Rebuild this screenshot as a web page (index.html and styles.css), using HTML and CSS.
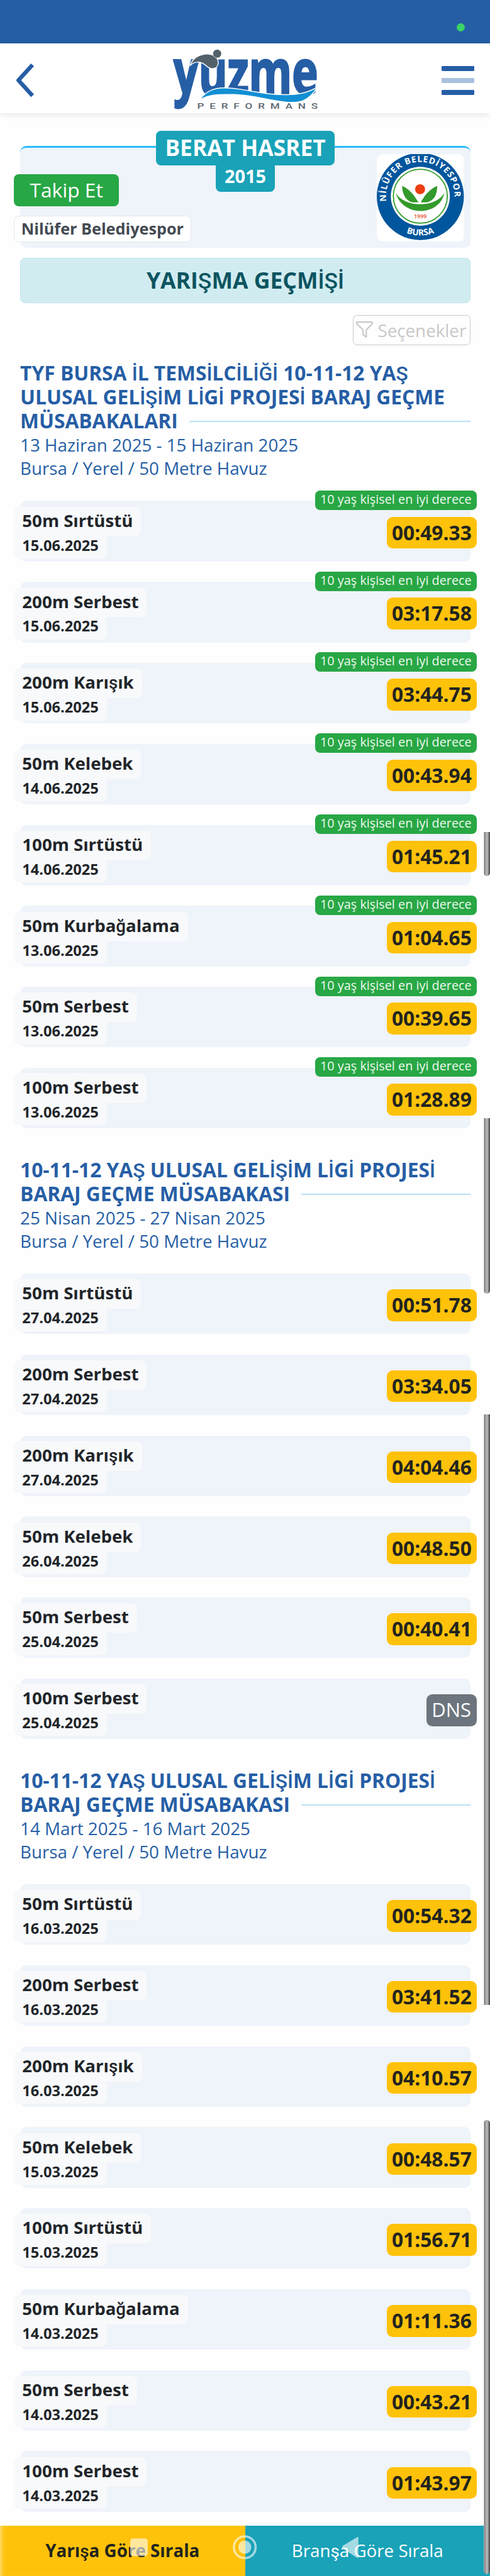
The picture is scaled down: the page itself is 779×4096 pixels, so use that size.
FILE: index.html
```html
<!DOCTYPE html>
<html lang="tr">
<head>
<meta charset="utf-8">
<title>Yüzme Performans</title>
<link rel="stylesheet" href="styles.css">
</head>
<body>
<div class="status"><span class="dot"></span></div>
<header class="header">
  <svg class="back" viewBox="0 0 42 74"><path d="M37 3 6 37l31 34" fill="none" stroke="#265ea5" stroke-width="9" stroke-linejoin="round"/></svg>
  <svg class="brand" viewBox="0 0 330 145">
    <text class="brand-word" x="7" y="101" textLength="318" lengthAdjust="spacingAndGlyphs">yuzme</text>
    <path d="M43 40C49 18 75 9 94 16c15 7 15 28 0 30-14 1-15-12-30-14-8-1-15 0-21 8z" fill="#53616b" stroke="#fff" stroke-width="2"/>
    <circle cx="103" cy="13" r="9.5" fill="#53616b" stroke="#fff" stroke-width="1"/>
    <path d="M64 115C85 85 115 86 150 91c40 6 70 14 115 12 25-1 40-6 59-16-20 32-40 35-68 33-40-4-70-15-115-17-35-1-55 0-77 12z" fill="#128fd3" stroke="#fff" stroke-width="2"/>
    <text class="brand-sub" x="59" y="135" textLength="278" lengthAdjust="spacingAndGlyphs">PERFORMANS</text>
  </svg>
  <div class="menu"><i></i><i class="mid"></i><i></i></div>
</header>
<main class="page">
  <section class="profile">
    <div class="who"><div class="name">BERAT HASRET</div><div class="year">2015</div></div>
    <div class="left"><button class="follow">Takip Et</button><div class="club">Nilüfer Belediyespor</div></div>
    <svg class="crest" viewBox="0 0 192 193">
      <defs><path id="arcTop" d="M21.500 105A75.500 75.500 0 1 1 170.500 105"/><path id="arcBottom" d="M10 93.500A86 86 0 0 0 182 93.500"/></defs>
      <rect width="192" height="193" fill="#fff"/>
      <circle cx="96" cy="93.500" r="96" fill="#00569d"/>
      <circle cx="96" cy="93" r="65" fill="#fff"/>
      <circle cx="96" cy="93" r="59.500" fill="none" stroke="#339a2b" stroke-width="2.500"/>
      <circle cx="95.500" cy="77.500" r="11" fill="#ec3e10"/>
      <path d="M56 70C76 79 85 96 92 106.500H83C68 107 56 92 56 70zM133 70C113 79 103 96 97 106.500H107C123 106 134 92 133 70zM42 86C61 118 128 120 149 86 138 138 57 139 42 86z" fill="#339a2b"/>
      <text class="crest-text"><textPath href="#arcTop" startOffset="1" textLength="250">NİLÜFER BELEDİYESPOR</textPath></text>
      <text class="crest-text"><textPath href="#arcBottom" startOffset="50%" text-anchor="middle">BURSA</textPath></text>
      <text class="crest-year" x="96" y="142" text-anchor="middle">1999</text>
    </svg>
  </section>
  <h1 class="band">YARI<b>Ş</b>MA GEÇM<b>İŞİ</b></h1>
  <div class="tools"><button class="options"><svg viewBox="0 0 40 42"><path d="M3 3h34v4L24 20v16l-7-5V20L3 7z" fill="none" stroke="#c8c8c8" stroke-width="3" stroke-linejoin="round"/></svg>Seçenekler</button></div>

  <section class="meet">
    <h2>TYF BURSA <b>İ</b>L TEMS<b>İ</b>LC<b>İ</b>L<b>İĞİ</b> 10-11-12 YA<b>Ş</b><br>ULUSAL GEL<b>İŞİ</b>M L<b>İ</b>G<b>İ</b> PROJES<b>İ</b> BARAJ GEÇME<span class="last">MÜSABAKALARI</span></h2>
    <p>13 Haziran 2025 - 15 Haziran 2025<br>Bursa / Yerel / 50 Metre Havuz</p>
    <div class="rows">
      <article class="row"><div><h3>50m Sırtüstü</h3><time>15.06.2025</time></div><strong>00:49.33</strong><em>10 yaş kişisel en iyi derece</em></article>
      <article class="row"><div><h3>200m Serbest</h3><time>15.06.2025</time></div><strong>03:17.58</strong><em>10 yaş kişisel en iyi derece</em></article>
      <article class="row"><div><h3>200m Karı<b>ş</b>ık</h3><time>15.06.2025</time></div><strong>03:44.75</strong><em>10 yaş kişisel en iyi derece</em></article>
      <article class="row"><div><h3>50m Kelebek</h3><time>14.06.2025</time></div><strong>00:43.94</strong><em>10 yaş kişisel en iyi derece</em></article>
      <article class="row"><div><h3>100m Sırtüstü</h3><time>14.06.2025</time></div><strong>01:45.21</strong><em>10 yaş kişisel en iyi derece</em></article>
      <article class="row"><div><h3>50m Kurba<b>ğ</b>alama</h3><time>13.06.2025</time></div><strong>01:04.65</strong><em>10 yaş kişisel en iyi derece</em></article>
      <article class="row"><div><h3>50m Serbest</h3><time>13.06.2025</time></div><strong>00:39.65</strong><em>10 yaş kişisel en iyi derece</em></article>
      <article class="row"><div><h3>100m Serbest</h3><time>13.06.2025</time></div><strong>01:28.89</strong><em>10 yaş kişisel en iyi derece</em></article>
    </div>
  </section>

  <section class="meet">
    <h2>10-11-12 YA<b>Ş</b> ULUSAL GEL<b>İŞİ</b>M L<b>İ</b>G<b>İ</b> PROJES<b>İ</b><span class="last">BARAJ GEÇME MÜSABAKASI</span></h2>
    <p>25 Nisan 2025 - 27 Nisan 2025<br>Bursa / Yerel / 50 Metre Havuz</p>
    <div class="rows">
      <article class="row"><div><h3>50m Sırtüstü</h3><time>27.04.2025</time></div><strong>00:51.78</strong></article>
      <article class="row"><div><h3>200m Serbest</h3><time>27.04.2025</time></div><strong>03:34.05</strong></article>
      <article class="row"><div><h3>200m Karı<b>ş</b>ık</h3><time>27.04.2025</time></div><strong>04:04.46</strong></article>
      <article class="row"><div><h3>50m Kelebek</h3><time>26.04.2025</time></div><strong>00:48.50</strong></article>
      <article class="row"><div><h3>50m Serbest</h3><time>25.04.2025</time></div><strong>00:40.41</strong></article>
      <article class="row"><div><h3>100m Serbest</h3><time>25.04.2025</time></div><strong class="dns">DNS</strong></article>
    </div>
  </section>

  <section class="meet">
    <h2>10-11-12 YA<b>Ş</b> ULUSAL GEL<b>İŞİ</b>M L<b>İ</b>G<b>İ</b> PROJES<b>İ</b><span class="last">BARAJ GEÇME MÜSABAKASI</span></h2>
    <p>14 Mart 2025 - 16 Mart 2025<br>Bursa / Yerel / 50 Metre Havuz</p>
    <div class="rows">
      <article class="row"><div><h3>50m Sırtüstü</h3><time>16.03.2025</time></div><strong>00:54.32</strong></article>
      <article class="row"><div><h3>200m Serbest</h3><time>16.03.2025</time></div><strong>03:41.52</strong></article>
      <article class="row"><div><h3>200m Karı<b>ş</b>ık</h3><time>16.03.2025</time></div><strong>04:10.57</strong></article>
      <article class="row"><div><h3>50m Kelebek</h3><time>15.03.2025</time></div><strong>00:48.57</strong></article>
      <article class="row"><div><h3>100m Sırtüstü</h3><time>15.03.2025</time></div><strong>01:56.71</strong></article>
      <article class="row"><div><h3>50m Kurba<b>ğ</b>alama</h3><time>14.03.2025</time></div><strong>01:11.36</strong></article>
      <article class="row"><div><h3>50m Serbest</h3><time>14.03.2025</time></div><strong>00:43.21</strong></article>
      <article class="row"><div><h3>100m Serbest</h3><time>14.03.2025</time></div><strong>01:43.97</strong></article>
    </div>
  </section>
</main>
<footer class="sort">
  <div class="by-race">Yarı<b>ş</b>a Göre Sırala</div>
  <div class="by-stroke">Bran<b>ş</b>a Göre Sırala</div>
  <svg class="sysnav" viewBox="0 0 1080 112"><g fill="#fff" fill-opacity=".6"><rect x="287" y="28" width="38.500" height="39" rx="6"/><circle cx="539.500" cy="47.500" r="14.500"/><path d="M786 26q4-3 4 1v42q0 4-4 1l-30-19q-4-3 0-7z"/></g><circle cx="539.500" cy="47.500" r="24" fill="none" stroke="#fff" stroke-opacity=".6" stroke-width="5"/></svg>
</footer>
<div class="thumb t1"></div><div class="thumb t2"></div><div class="thumb t3"></div><div class="thumb t4"></div>
</body>
</html>
```
FILE: styles.css
```css
/* 1rem = 10 design pixels */
html { font-size: 7.2115px; }
* { box-sizing: border-box; }
body { position: relative; margin: 0; width: 779px; height: 4096px; overflow: hidden; background: #fefefe; font-family: "Open Sans", "Noto Sans", sans-serif; display: flex; flex-direction: column; }
h1, h2, h3, p { margin: 0; }
button { font-family: inherit; }
b { font-family: Roboto, sans-serif; font-weight: 500; line-height: 0; }

.status { flex: none; height: 9.6rem; background: #265ea5; display: flex; justify-content: flex-end; padding: 5.1rem 5.5rem 0 0; }
.dot { width: 1.8rem; height: 1.8rem; border-radius: 50%; background: #39d468; }

.header { flex: none; height: 15.4rem; background: #fff; box-shadow: 0 .3rem 1.6rem rgba(0,0,0,.12); display: flex; justify-content: space-between; align-items: flex-start; padding: 0 3.4rem; }
.back { width: 4.2rem; height: 7.4rem; margin-top: 4.4rem; }
.brand { width: 33rem; height: 14.5rem; margin: .9rem 0 0 3.1rem; overflow: visible; }
.brand-word { font: 700 134px "Open Sans", sans-serif; fill: #265ea5; stroke: #265ea5; stroke-width: 4; }
.brand-sub { font: 500 17.5px Roboto, sans-serif; letter-spacing: 9px; fill: #5c6870; }
.menu { width: 7.3rem; display: flex; flex-direction: column; gap: 1.5rem; margin-top: 5rem; }
.menu i { height: 1.1rem; border-radius: .2rem; background: #265ea5; }
.menu .mid { background: #a9c0de; }

.page { flex: none; height: 531.9rem; padding: 7.2rem 4.3rem 0 4.45rem; }
.profile { position: relative; height: 22.5rem; border-top: .5rem solid #29bdfa; border-radius: 1.4rem; background: #eff3fa; display: flex; justify-content: space-between; padding: 1.35rem 1.4rem 0 0; }
.who { position: absolute; top: -3.8rem; left: 0; right: 0; display: flex; flex-direction: column; align-items: center; color: #fff; font-weight: 700; }
.name { width: 39.3rem; height: 7.6rem; border-radius: 1.1rem; background: #19a2b8; font-size: 4.9rem; line-height: 7.4rem; text-align: center; white-space: nowrap; }
.year { width: 13rem; height: 5.9rem; border-radius: 0 0 1.1rem 1.1rem; background: #19a2b8; font-size: 4rem; line-height: 4.7rem; text-align: center; }
.left { margin: 4.5rem 0 0 -1.35rem; display: flex; flex-direction: column; align-items: flex-start; gap: 2.1rem; }
.follow { border: 0; padding: 0; width: 23.1rem; height: 7rem; border-radius: 1.1rem; background: #28a745; color: #fff; font-size: 4.4rem; line-height: 7rem; }
.club { width: 39rem; height: 5.8rem; border: .2rem solid #e4e8f0; border-radius: 1.1rem; background: #fff; color: #434a52; font-size: 3.5rem; font-weight: 700; line-height: 5.3rem; text-align: center; white-space: nowrap; }
.crest { width: 19.2rem; height: 19.3rem; border-radius: 1.3rem; }
.crest-text { font: 700 19px "Open Sans", sans-serif; fill: #fff; }
.crest-year { font: 600 12.5px "Open Sans", sans-serif; fill: #e5502a; }

.band { height: 10rem; margin-top: 2.2rem; border: .2rem solid #bee5eb; border-radius: 1.1rem; background: #d1ecf1; color: #0c5460; font-size: 4.93rem; line-height: 9.6rem; text-align: center; }
.tools { display: flex; justify-content: flex-end; margin-top: 2.6rem; height: 6.7rem; }
.options { display: flex; align-items: center; width: 25.9rem; height: 6.7rem; padding: 0 .4rem; gap: .9rem; border: .2rem solid #c8c8c8; border-radius: .9rem; background: transparent; color: #c8c8c8; font-size: 3.85rem; line-height: 6.2rem; white-space: nowrap; }
.options svg { width: 4rem; height: 4.2rem; flex: none; }

.meet { padding-top: 6.5rem; }
.tools + .meet { padding-top: 3.35rem; }
.meet h2 { color: #265ea5; font-size: 4.4rem; line-height: 5.3rem; white-space: nowrap; }
.last { display: flex; align-items: center; gap: 2.5rem; }
.last::after { content: ""; flex: 1; height: .3rem; background: #b8e2f4; margin-top: .2rem; }
.meet p { color: #265ea5; font-size: 3.85rem; line-height: 5.2rem; white-space: nowrap; }
.tools + .meet p { padding-top: .1rem; }
.rows { display: grid; gap: 4.5rem; margin-top: 4.5rem; }
.row { position: relative; height: 13.36rem; border-radius: 1.4rem; background: #eff3fa; display: flex; justify-content: space-between; align-items: flex-start; color: #212529; }
.row > div { margin: 1.3rem 0 0 -1.35rem; display: flex; flex-direction: column; align-items: flex-start; }
.row h3 { height: 6.5rem; padding: 0 1.8rem; border-radius: 1.2rem 1.2rem 1.2rem 0; background: #f8f9fb; font-size: 3.83rem; line-height: 6.1rem; white-space: nowrap; }
.row time { height: 4.9rem; padding: 0 1.8rem; border-radius: 0 0 1.2rem 1.2rem; background: #f8f9fb; font-size: 3.27rem; font-weight: 700; line-height: 3.9rem; }
.row strong { width: 19.8rem; height: 7rem; margin: 3.5rem -1.35rem 0 0; border-radius: 1.3rem; background: #ffc20a; font-size: 4.4rem; line-height: 6.9rem; text-align: center; color: #22241f; }
.row .dns { width: 11.1rem; background: #6c757d; color: #fff; font-weight: 400; font-size: 4.3rem; }
.row em { position: absolute; top: -2.3rem; right: -1.35rem; width: 35.6rem; height: 4.3rem; border-radius: 1.1rem; background: #28a745; color: #eef9ef; font-size: 2.75rem; font-style: normal; line-height: 4rem; text-align: center; white-space: nowrap; }

.sort { position: relative; flex: none; height: 11.2rem; display: grid; grid-template-columns: 1fr 1fr; font-size: 3.85rem; line-height: 11rem; text-align: center; white-space: nowrap; }
.by-race { background: #ffc20a; color: #22241f; font-weight: 700; box-shadow: inset .8rem 0 1rem -.5rem #ffe08a; }
.by-stroke { background: #19a2b8; color: #fff; }
.by-stroke b { font-weight: 400; }
.sysnav { position: absolute; inset: 0; width: 100%; height: 100%; }

.thumb { position: absolute; right: 0; width: 1.4rem; background: linear-gradient(90deg, #ddd 0, #777 15%, #aaa 30%, #b6b6b6 55%, #858585 80%, #333 90%, #777 100%); }
.t1 { top: 183.5rem; height: 9.6rem; border-radius: 0 0 .7rem .7rem; }
.t2 { top: 246.5rem; height: 38.7rem; border-radius: 0 0 .7rem .7rem; }
.t3 { top: 311.8rem; height: 130.3rem; }
.t4 { top: 467.5rem; height: 100rem; border-radius: .7rem; }
```
